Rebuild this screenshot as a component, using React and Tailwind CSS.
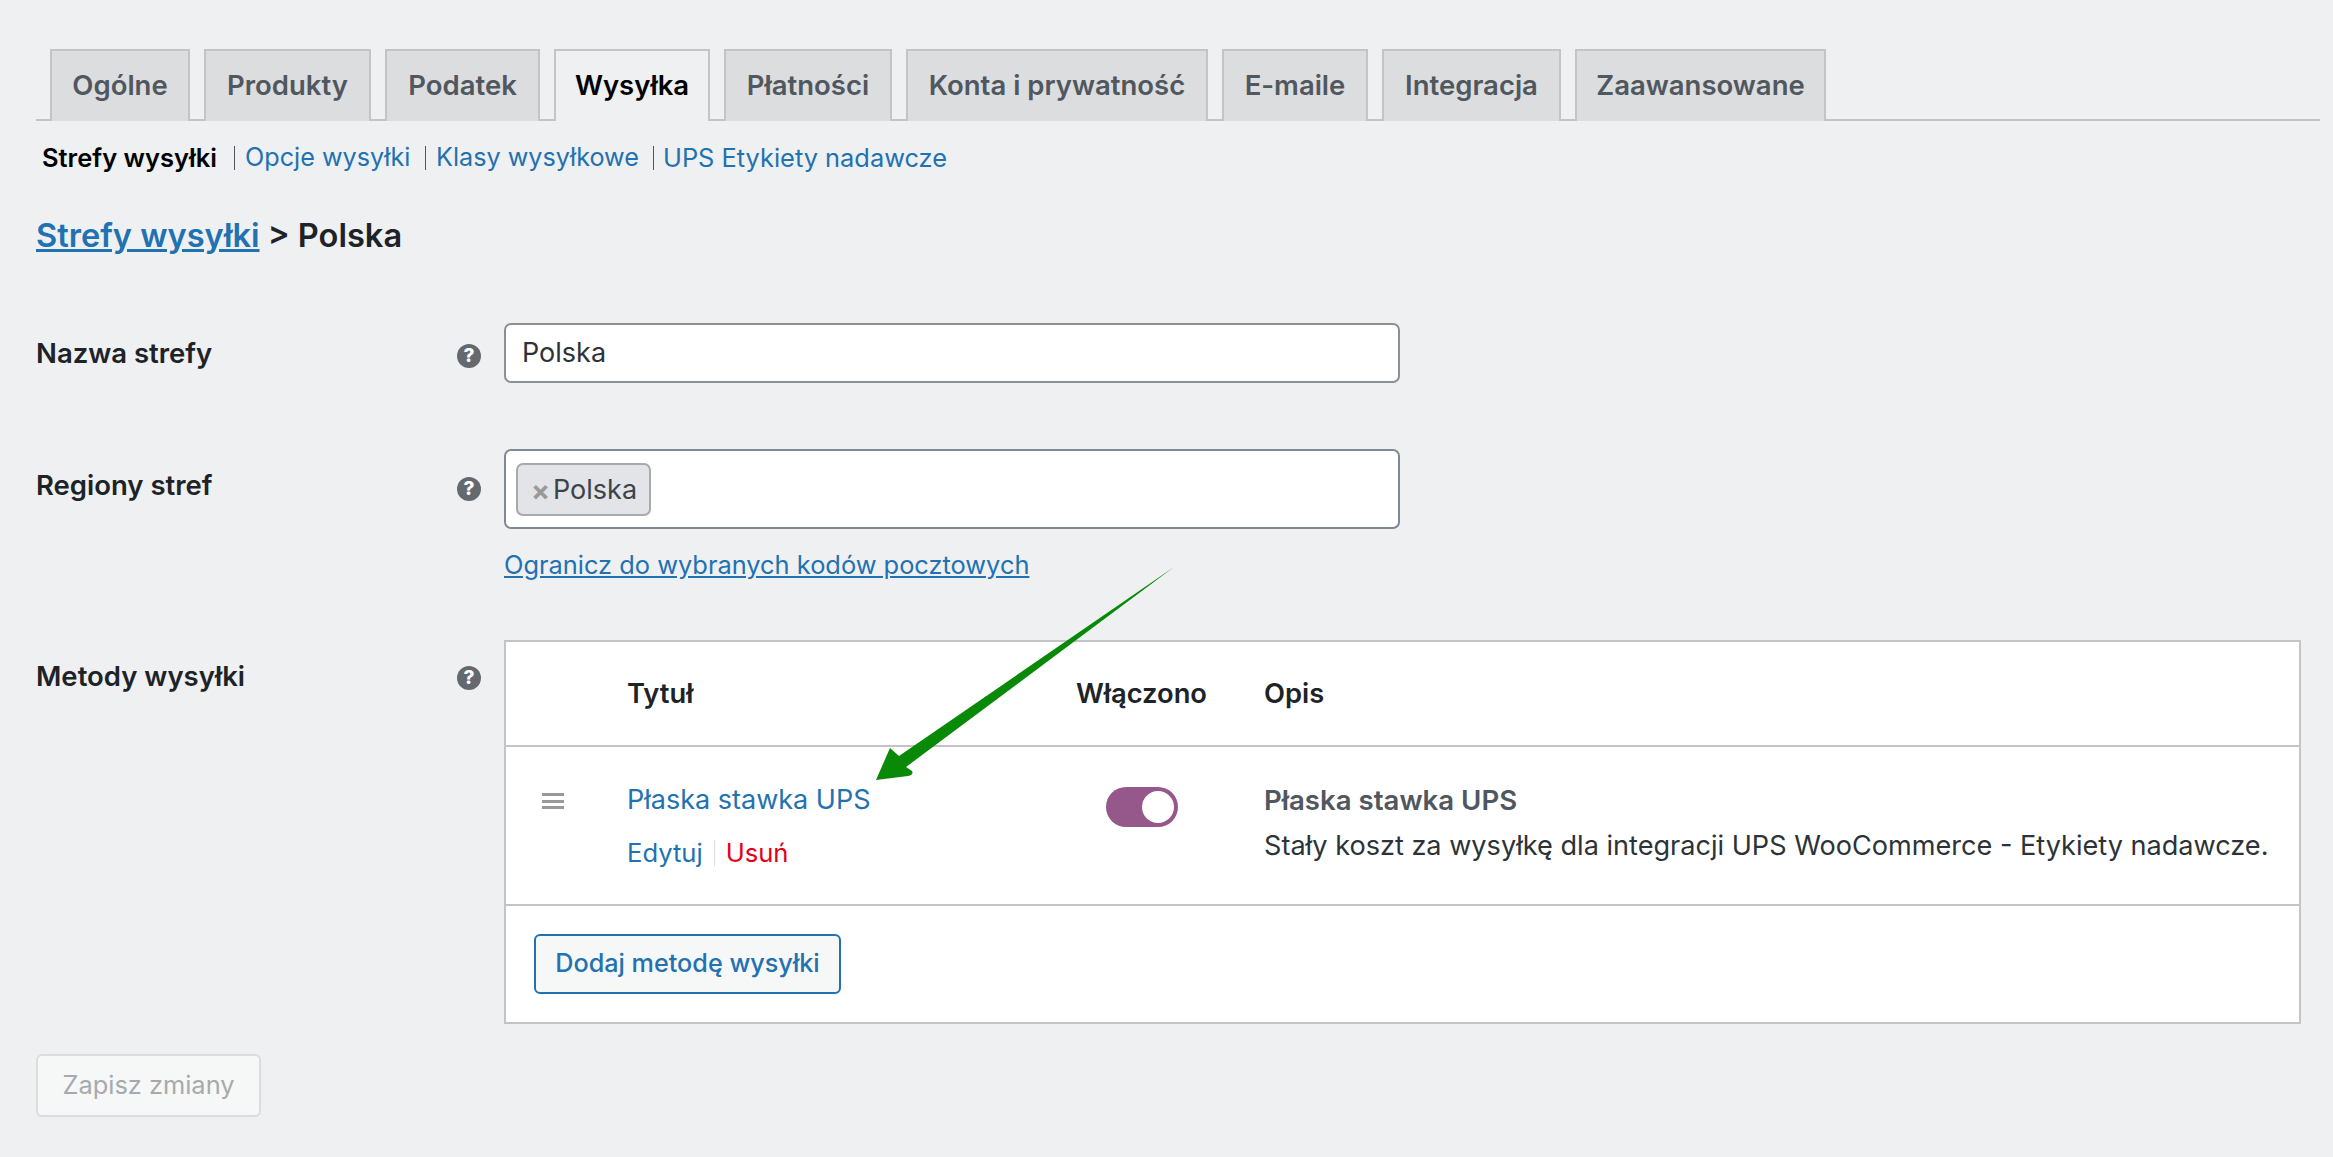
const tabs = [
    { label: 'Ogólne', width: 'w-[140px]' },
    { label: 'Produkty', width: 'w-[167px]' },
    { label: 'Podatek', width: 'w-[155px]' },
    { label: 'Wysyłka', width: 'w-[156px]', active: true },
    { label: 'Płatności', width: 'w-[168px]' },
    { label: 'Konta i prywatność', width: 'w-[302px]' },
    { label: 'E-maile', width: 'w-[146px]' },
    { label: 'Integracja', width: 'w-[179px]' },
    { label: 'Zaawansowane', width: 'w-[251px]' }
]

function HelpIcon({ className }) {
    return (
        <div className={`w-[24px] h-[24px] rounded-full bg-[#646970] text-white text-[19px] leading-[24px] font-extrabold text-center ${className}`}>
            ?
        </div>
    )
}

function FormRow({ label, labelClass, iconClass, children }) {
    return (
        <div className="flex items-start">
            <div className={`w-[421px] text-[27.5px] leading-[36px] font-semibold text-[#1d2327] ${labelClass}`}>{label}</div>
            <div className="w-[47px]">
                <HelpIcon className={iconClass} />
            </div>
            <div className="flex-1">{children}</div>
        </div>
    )
}

export default function App() {
    return (
        <div className="relative min-h-[1157px] overflow-hidden bg-[#eff0f2] pl-[36px] pr-[13px] pt-[49px] [font-family:Inter,sans-serif]">
            {/* Tabs */}
            <nav className="flex gap-[14px] h-[72px] pl-[14px] border-b-2 border-[#c3c4c7]">
                {tabs.map((tab) => (
                    <div
                        key={tab.label}
                        className={`${tab.width} h-[72px] flex items-center justify-center border-x-2 border-t-2 border-[#c3c4c7] text-[27.5px] font-semibold whitespace-nowrap ${tab.active ? 'bg-[#eff0f2] text-black' : 'bg-[#dcdddf] text-[#50575e]'}`}
                    >
                        {tab.label}
                    </div>
                ))}
            </nav>

            {/* Sub nav */}
            <div className="flex items-center h-[36px] mt-[19px] pl-[6px] text-[25.2px] whitespace-nowrap">
                <span className="w-[176px] text-[25.5px] font-semibold text-black">Strefy wysyłki</span>
                <span className="w-px h-[24px] ml-[16px] bg-[#50575e]" />
                <a className="ml-[10px] w-[164px] text-[#2271b1]">Opcje wysyłki</a>
                <span className="w-px h-[24px] ml-[16px] bg-[#50575e]" />
                <a className="ml-[10px] w-[200px] text-[#2271b1]">Klasy wysyłkowe</a>
                <span className="w-px h-[24px] ml-[17px] bg-[#50575e]" />
                <a className="ml-[9px] text-[25.4px] text-[#2271b1]">UPS Etykiety nadawcze</a>
            </div>

            {/* Heading */}
            <h2 className="mt-[39px] h-[40px] text-[32.6px] leading-[40px] font-semibold text-[#1d2327]">
                <a className="text-[#2271b1] underline">Strefy wysyłki</a> &gt; Polska
            </h2>

            {/* Zone name */}
            <div className="mt-[68px]">
                <FormRow label="Nazwa strefy" labelClass="mt-[12px]" iconClass="mt-[21px]">
                    <div className="w-[896px] h-[60px] pl-[16px] pt-[1px] flex items-center bg-white border-2 border-[#8c8f94] rounded-[7px] text-[27px] text-[#2c3338]">
                        Polska
                    </div>
                </FormRow>
            </div>

            {/* Regions */}
            <div className="mt-[66px]">
                <FormRow label="Regiony stref" labelClass="mt-[18px]" iconClass="mt-[28px]">
                    <div className="w-[896px] h-[80px] pl-[10px] flex items-center bg-white border-2 border-[#7e8993] rounded-[7px]">
                        <div className="w-[135px] h-[53px] pt-[3px] flex items-center pl-[13px] bg-[#e2e4e7] border-2 border-[#a7aaad] rounded-[7px] text-[27px] text-[#3c434a]">
                            <span className="w-[22px] text-[28px] leading-none font-bold text-[#999999]">×</span>
                            Polska
                        </div>
                    </div>
                    <a className="block mt-[20px] text-[25.4px] leading-[32px] text-[#2271b1] underline">
                        Ogranicz do wybranych kodów pocztowych
                    </a>
                </FormRow>
            </div>

            {/* Shipping methods */}
            <div className="mt-[59px]">
                <FormRow label="Metody wysyłki" labelClass="mt-[18px]" iconClass="mt-[26px]">
                    <div className="w-[1797px] h-[384px] bg-white border-2 border-[#c3c4c7] flex flex-col">
                        <div className="grid grid-cols-[121px_437px_155px_1fr] items-center h-[105px] pt-[2px] border-b-2 border-[#c3c4c7] text-[27.3px] font-semibold text-[#1d2327]">
                            <div />
                            <div>Tytuł</div>
                            <div className="text-center whitespace-nowrap">Włączono</div>
                            <div className="pl-[45px]">Opis</div>
                        </div>
                        <div className="grid grid-cols-[121px_437px_155px_1fr] h-[159px] border-b-2 border-[#c3c4c7]">
                            <div className="pl-[36px] pt-[46px]">
                                <div className="w-[22px] h-[16px] flex flex-col justify-between">
                                    <div className="h-[3px] bg-[#999999]" />
                                    <div className="h-[3px] bg-[#999999]" />
                                    <div className="h-[3px] bg-[#999999]" />
                                </div>
                            </div>
                            <div className="pt-[35px]">
                                <a className="block text-[27px] leading-[36px] text-[#2271b1]">Płaska stawka UPS</a>
                                <div className="flex items-center mt-[19px] text-[25.6px] leading-[32px]">
                                    <a className="text-[#2271b1]">Edytuj</a>
                                    <span className="w-px h-[26px] mx-[11px] bg-[#dcdcde]" />
                                    <a className="text-[#e3001b]">Usuń</a>
                                </div>
                            </div>
                            <div className="pt-[40px] pl-[1px] flex justify-center items-start">
                                <div className="w-[72px] h-[40px] rounded-full bg-[#96588a] flex items-center justify-end pr-[4px]">
                                    <div className="w-[32px] h-[32px] rounded-full bg-white" />
                                </div>
                            </div>
                            <div className="pl-[45px] pt-[35px] text-[#50575e]">
                                <div className="text-[27.6px] leading-[36px] font-semibold">Płaska stawka UPS</div>
                                <div className="mt-[10px] text-[27.1px] leading-[36px] whitespace-nowrap text-[#2c3338]">
                                    Stały koszt za wysyłkę dla integracji UPS WooCommerce - Etykiety nadawcze.
                                </div>
                            </div>
                        </div>
                        <div className="flex-1 pl-[28px] pt-[28px]">
                            <button className="w-[307px] h-[60px] bg-[#f6f7f7] border-2 border-[#2271b1] rounded-[6px] text-[25.2px] font-medium text-[#2271b1]">
                                Dodaj metodę wysyłki
                            </button>
                        </div>
                    </div>
                </FormRow>
            </div>

            {/* Save */}
            <button className="block mt-[30px] w-[225px] h-[63px] bg-[#f6f7f7] border-2 border-[#dcdcde] rounded-[6px] text-[25.4px] text-[#a7aaad]">
                Zapisz zmiany
            </button>

            {/* Arrow annotation */}
            <svg className="absolute left-0 top-0 pointer-events-none" width="2333" height="1157" viewBox="0 0 2333 1157">
                <path
                    d="M1174 567 L899 756 L890 748 L876 780 L908 776 Q914 775 912 771 L906 767 Z"
                    fill="#088a08"
                />
            </svg>
        </div>
    )
}
